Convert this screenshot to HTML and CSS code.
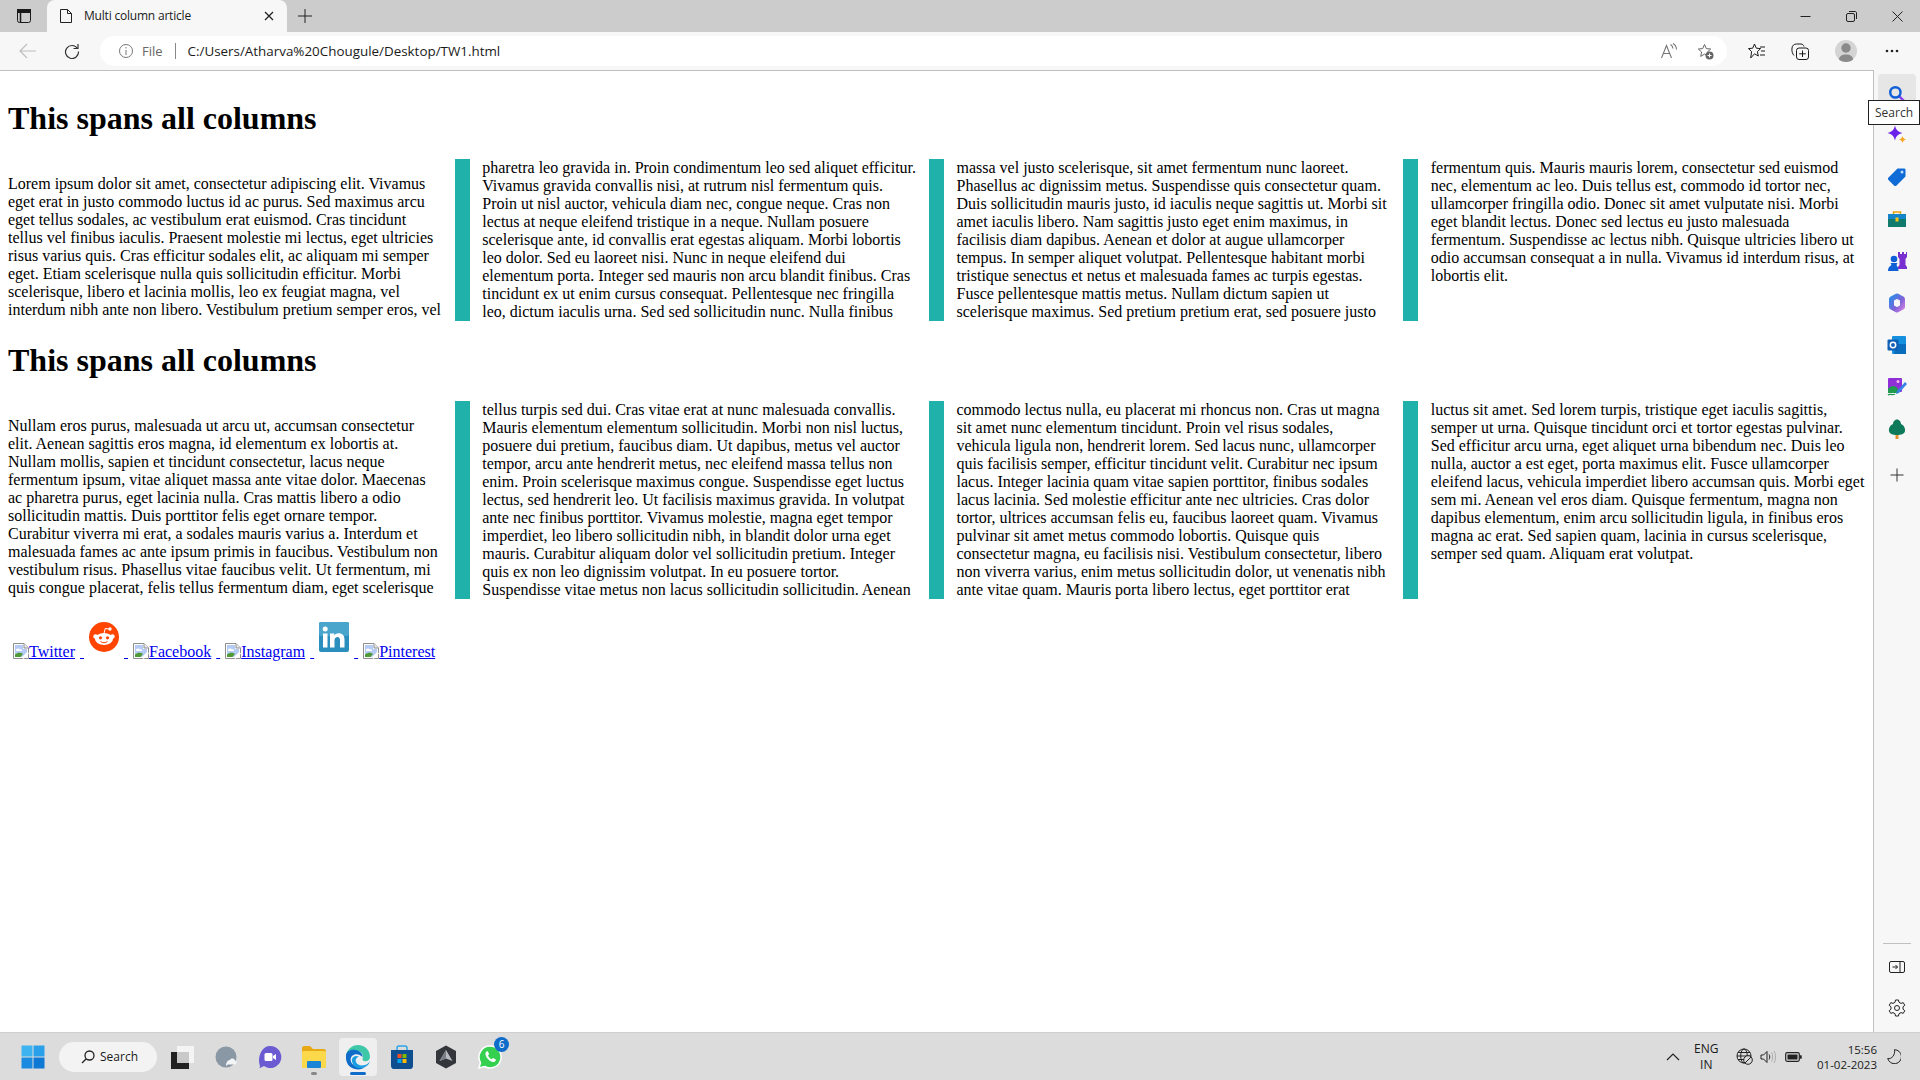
FILE: index.html
```html
<!DOCTYPE html>
<html lang="en">
<head>
  <meta charset="UTF-8" />
  <title>Multi column article</title>
  <link rel="stylesheet" href="styles.css">
</head>
<body>
  <svg class="defs" width="0" height="0">
    <symbol id="broken" viewBox="0 0 16 16">
      <path d="M0.5 0.5H11L15.5 5V15.5H0.5Z" fill="#fff" stroke="#8f8f8f"/>
      <path d="M11 0.5V5H15.5" fill="#e8e8e8" stroke="#8f8f8f"/>
      <path d="M2 2H10V6H14V9L9 14H2Z" fill="#b4cbf5"/>
      <path d="M3 6.5C4 5 6 5 7 6.5C8.500 6 9.500 7 9 8H3Z" fill="#fff"/>
      <path d="M2 14V11.500C5 9 8 9.500 10 11L7.500 14Z" fill="#4f9a35"/>
      <path d="M10 15.500L15.500 10" stroke="#fff" stroke-width="1.500"/>
    </symbol>
    <linearGradient id="m365" x1="0" y1="0" x2="1" y2="1">
      <stop offset="0" stop-color="#2f8be8"/>
      <stop offset="0.6" stop-color="#7d63d8"/>
      <stop offset="1" stop-color="#c67be0"/>
    </linearGradient>
  </svg>

  <!-- Title bar -->
  <div class="titlebar">
    <div class="tab-actions">
      <svg width="16" height="16" viewBox="0 0 16 16" fill="none" stroke="#1a1a1a"><rect x="1.500" y="1.500" width="13" height="13" rx="2"/><rect x="1.500" y="1.500" width="13" height="3" fill="#1a1a1a"/><path d="M4.500 4.500V14.500" stroke-width="1.500"/></svg>
    </div>
    <div class="tab">
      <svg width="14" height="16" viewBox="0 0 14 16" fill="none" stroke="#222"><path d="M1.500 1.500H8.500L12.500 5.500V14.500H1.500Z"/><path d="M8.500 1.500V5.500H12.500"/></svg>
      <span class="tab-title">Multi column article</span>
      <svg class="tab-close" width="10" height="10" viewBox="0 0 10 10" stroke="#222" stroke-width="1.300"><path d="M1 1L9 9M9 1L1 9"/></svg>
    </div>
    <div class="new-tab">
      <svg width="16" height="16" viewBox="0 0 16 16" stroke="#222"><path d="M8 1V15M1 8H15"/></svg>
    </div>
    <div class="window-controls">
      <div class="win-btn"><svg width="11" height="11" viewBox="0 0 11 11" stroke="#222"><path d="M0.500 5.500H10.500"/></svg></div>
      <div class="win-btn"><svg width="11" height="11" viewBox="0 0 11 11" fill="none" stroke="#222"><rect x="0.500" y="2.500" width="8" height="8" rx="1.500"/><path d="M3 0.500H9C10 0.500 10.500 1 10.500 2V8"/></svg></div>
      <div class="win-btn"><svg width="11" height="11" viewBox="0 0 11 11" stroke="#222"><path d="M0.500 0.500L10.500 10.500M10.500 0.500L0.500 10.500"/></svg></div>
    </div>
  </div>

  <!-- Toolbar -->
  <div class="toolbar">
    <div class="nav-btn"><svg width="18" height="16" viewBox="0 0 18 16" fill="none" stroke="#bdbdbd" stroke-width="1.200"><path d="M17 8H1M8 1L1 8L8 15"/></svg></div>
    <div class="nav-btn"><svg width="16" height="16" viewBox="0 0 16 16" fill="none" stroke="#333" stroke-width="1.200"><path d="M13.500 5.500A6.500 6.500 0 1 0 14.500 8.500"/><path d="M9.500 5.500H14V1"/></svg></div>
    <div class="address">
      <svg width="16" height="16" viewBox="0 0 16 16" fill="none" stroke="#777"><circle cx="8" cy="8" r="6.500"/><path d="M8 7V12M8 4V5.500"/></svg>
      <span class="scheme">File</span>
      <span class="sep"></span>
      <span class="url">C:/Users/Atharva%20Chougule/Desktop/TW1.html</span>
      <div class="address-icons">
        <svg width="16" height="16" viewBox="0 0 16 16" fill="none" stroke="#777" stroke-width="1.100"><path d="M0.500 15L5.500 2.500L10.500 15M2.300 10.500H8.700"/><path d="M9.500 1.500C11 2.500 11.700 3.500 12 5.500M12 0.500C14 1.500 15.300 3.500 15.500 6.500"/></svg>
        <svg width="17" height="17" viewBox="0 0 17 17"><path d="M7.500 1.500L9.300 5.600L13.700 6L10.400 9L11.300 13.400L7.500 11.100L3.700 13.400L4.600 9L1.300 6L5.700 5.600Z" fill="none" stroke="#666"/><circle cx="12.500" cy="12.500" r="4" fill="#666"/><path d="M10.500 12.500H14.500M12.500 10.500V14.500" stroke="#fff"/></svg>
      </div>
    </div>
    <div class="tool-btn"><svg width="18" height="16" viewBox="0 0 18 16" fill="none" stroke="#1a1a1a"><path d="M6.500 1L8.300 5.200L12.600 5.600L9.400 8.600L10.300 13L6.500 10.800L2.700 15L3.600 8.600L0.500 5.600L4.700 5.200Z"/><path d="M12 4H17M13 8H17M12 12H17"/></svg></div>
    <div class="tool-btn"><svg width="18" height="17" viewBox="0 0 18 17" fill="none" stroke="#1a1a1a"><path d="M3 12.500C1.500 11 0.500 8 1 5C1.300 2.500 3 1 5.500 1H10C11.500 1 12.500 2 13 3.500"/><rect x="5.500" y="5" width="12" height="11.500" rx="2.500"/><path d="M11.500 7.500V14M8.200 10.800H14.800"/></svg></div>
    <div class="avatar-btn">
      <div class="avatar"><svg width="22" height="22" viewBox="0 0 22 22" fill="#8a8a8a"><circle cx="11" cy="8" r="4.700"/><path d="M3.500 22C3.500 16 7 14.500 11 14.500C15 14.500 18.500 16 18.500 22Z"/></svg></div>
    </div>
    <div class="tool-btn"><svg width="14" height="4" viewBox="0 0 14 4" fill="#222"><circle cx="2" cy="2" r="1.300"/><circle cx="7" cy="2" r="1.300"/><circle cx="12" cy="2" r="1.300"/></svg></div>
  </div>

  <div class="main">
    <!-- Page content -->
    <div class="page">
      <div class="article">
        <h1>This spans all columns</h1>
        <p>Lorem ipsum dolor sit amet, consectetur adipiscing elit. Vivamus eget erat in justo commodo luctus id ac purus. Sed maximus arcu eget tellus sodales, ac vestibulum erat euismod. Cras tincidunt tellus vel finibus iaculis. Praesent molestie mi lectus, eget ultricies risus varius quis. Cras efficitur sodales elit, ac aliquam mi semper eget. Etiam scelerisque nulla quis sollicitudin efficitur. Morbi scelerisque, libero et lacinia mollis, leo ex feugiat magna, vel interdum nibh ante non libero. Vestibulum pretium semper eros, vel pharetra leo gravida in. Proin condimentum leo sed aliquet efficitur. Vivamus gravida convallis nisi, at rutrum nisl fermentum quis. Proin ut nisl auctor, vehicula diam nec, congue neque. Cras non lectus at neque eleifend tristique in a neque. Nullam posuere scelerisque ante, id convallis erat egestas aliquam. Morbi lobortis leo dolor. Sed eu laoreet nisi. Nunc in neque eleifend dui elementum porta. Integer sed mauris non arcu blandit finibus. Cras tincidunt ex ut enim cursus consequat. Pellentesque nec fringilla leo, dictum iaculis urna. Sed sed sollicitudin nunc. Nulla finibus massa vel justo scelerisque, sit amet fermentum nunc laoreet. Phasellus ac dignissim metus. Suspendisse quis consectetur quam. Duis sollicitudin mauris justo, id iaculis neque sagittis ut. Morbi sit amet iaculis libero. Nam sagittis justo eget enim maximus, in facilisis diam dapibus. Aenean et dolor at augue ullamcorper tempus. In semper aliquet volutpat. Pellentesque habitant morbi tristique senectus et netus et malesuada fames ac turpis egestas. Fusce pellentesque mattis metus. Nullam dictum sapien ut scelerisque maximus. Sed pretium pretium erat, sed posuere justo fermentum quis. Mauris mauris lorem, consectetur sed euismod nec, elementum ac leo. Duis tellus est, commodo id tortor nec, ullamcorper fringilla odio. Donec sit amet vulputate nisi. Morbi eget blandit lectus. Donec sed lectus eu justo malesuada fermentum. Suspendisse ac lectus nibh. Quisque ultricies libero ut odio accumsan consequat a in nulla. Vivamus id interdum risus, at lobortis elit.</p>
        <h1>This spans all columns</h1>
        <p>Nullam eros purus, malesuada ut arcu ut, accumsan consectetur elit. Aenean sagittis eros magna, id elementum ex lobortis at. Nullam mollis, sapien et tincidunt consectetur, lacus neque fermentum ipsum, vitae aliquet massa ante vitae dolor. Maecenas ac pharetra purus, eget lacinia nulla. Cras mattis libero a odio sollicitudin mattis. Duis porttitor felis eget ornare tempor. Curabitur viverra mi erat, a sodales mauris varius a. Interdum et malesuada fames ac ante ipsum primis in faucibus. Vestibulum non vestibulum risus. Phasellus vitae faucibus velit. Ut fermentum, mi quis congue placerat, felis tellus fermentum diam, eget scelerisque tellus turpis sed dui. Cras vitae erat at nunc malesuada convallis. Mauris elementum elementum sollicitudin. Morbi non nisl luctus, posuere dui pretium, faucibus diam. Ut dapibus, metus vel auctor tempor, arcu ante hendrerit metus, nec eleifend massa tellus non enim. Proin scelerisque maximus congue. Suspendisse eget luctus lectus, sed hendrerit leo. Ut facilisis maximus gravida. In volutpat ante nec finibus porttitor. Vivamus molestie, magna eget tempor imperdiet, leo libero sollicitudin nibh, in blandit dolor urna eget mauris. Curabitur aliquam dolor vel sollicitudin pretium. Integer quis ex non leo dignissim volutpat. In eu posuere tortor. Suspendisse vitae metus non lacus sollicitudin sollicitudin. Aenean commodo lectus nulla, eu placerat mi rhoncus non. Cras ut magna sit amet nunc elementum tincidunt. Proin vel risus sodales, vehicula ligula non, hendrerit lorem. Sed lacus nunc, ullamcorper quis facilisis semper, efficitur tincidunt velit. Curabitur nec ipsum lacus. Integer lacinia quam vitae sapien porttitor, finibus sodales lacus lacinia. Sed molestie efficitur ante nec ultricies. Cras dolor tortor, ultrices accumsan felis eu, faucibus laoreet quam. Vivamus pulvinar sit amet metus commodo lobortis. Quisque quis consectetur magna, eu facilisis nisi. Vestibulum consectetur, libero non viverra varius, enim metus sollicitudin dolor, ut venenatis nibh ante vitae quam. Mauris porta libero lectus, eget porttitor erat luctus sit amet. Sed lorem turpis, tristique eget iaculis sagittis, semper ut urna. Quisque tincidunt orci et tortor egestas pulvinar. Sed efficitur arcu urna, eget aliquet urna bibendum nec. Duis leo nulla, auctor a est eget, porta maximus elit. Fusce ullamcorper eleifend lacus, vehicula imperdiet libero accumsan quis. Morbi eget sem mi. Aenean vel eros diam. Quisque fermentum, magna non dapibus elementum, enim arcu sollicitudin ligula, in finibus eros magna ac erat. Sed sapien quam, lacinia in cursus scelerisque, semper sed quam. Aliquam erat volutpat.</p>
      </div>

      <!-- Social links -->
      <div class="social"><a href="#"><span class="broken"><svg width="16" height="16"><use href="#broken"/></svg>Twitter</span> </a><a href="#"><svg class="social-img" width="30" height="30" viewBox="0 0 30 30"><circle cx="15" cy="15" r="15" fill="#ff4500"/><ellipse cx="15" cy="17" rx="9" ry="6" fill="#fff"/><circle cx="6.500" cy="14.500" r="2.200" fill="#fff"/><circle cx="23.500" cy="14.500" r="2.200" fill="#fff"/><circle cx="21" cy="7" r="1.700" fill="#fff"/><path d="M15 11.500L16.200 6.500L21 7.200" fill="none" stroke="#fff"/><circle cx="11.500" cy="15.800" r="1.600" fill="#ff4500"/><circle cx="18.500" cy="15.800" r="1.600" fill="#ff4500"/><path d="M11.500 19.500C13.500 21 16.500 21 18.500 19.500" fill="none" stroke="#ff4500"/></svg> </a><a href="#"><span class="broken"><svg width="16" height="16"><use href="#broken"/></svg>Facebook</span> </a><a href="#"><span class="broken"><svg width="16" height="16"><use href="#broken"/></svg>Instagram</span> </a><a href="#"><svg class="social-img" width="30" height="30" viewBox="0 0 30 30"><rect width="30" height="30" rx="2" fill="#2b8fbd"/><rect width="30" height="14" rx="2" fill="#4aa5cd"/><rect x="4" y="11.500" width="4.500" height="14" fill="#fff"/><circle cx="6.200" cy="7" r="2.500" fill="#fff"/><path d="M11 11.500H15.300V13.500C16.200 12 17.800 11.200 19.700 11.200C23.500 11.200 25.500 13.500 25.500 17.500V25.500H21V18.300C21 16.300 20.300 15 18.500 15C16.600 15 15.500 16.300 15.500 18.300V25.500H11Z" fill="#fff"/></svg> </a><a href="#"><span class="broken"><svg width="16" height="16"><use href="#broken"/></svg>Pinterest</span></a></div>
    </div>

    <!-- Edge sidebar -->
    <div class="sidebar">
      <div class="side-btn active"><svg class="side-search" width="18" height="18" viewBox="0 0 22 22" fill="none"><path d="M13.500 13.500L20 20" stroke="#8a3ff0" stroke-width="3" stroke-linecap="round"/><circle cx="9" cy="9" r="6.300" stroke="#0f5fd7" stroke-width="3"/></svg></div>
      <div class="side-btn"><svg width="20" height="20" viewBox="0 0 20 20"><path d="M8 0.500C9 5 11 7 15.500 8C11 9 9 11 8 15.500C7 11 5 9 0.500 8C5 7 7 5 8 0.500Z" fill="#6a22e8"/><path d="M15.500 11C16 13 17 14 19 14.500C17 15 16 16 15.500 18C15 16 14 15 12 14.500C14 14 15 13 15.500 11Z" fill="#f5a623"/></svg></div>
      <div class="side-btn"><svg width="20" height="20" viewBox="0 0 20 20"><path d="M10.500 1.500H17C18 1.500 18.500 2 18.500 3V9.500L9.500 18.500C8.800 19.200 7.700 19.200 7 18.500L1.500 13C0.800 12.300 0.800 11.200 1.500 10.500Z" fill="#0f6cd6"/><circle cx="15" cy="5" r="1.500" fill="#bcdcff"/></svg></div>
      <div class="side-btn"><svg width="20" height="18" viewBox="0 0 20 18"><path d="M6.500 5V2H13.500V5" fill="none" stroke="#e5a50a" stroke-width="1.500"/><rect x="1" y="4" width="18" height="5" fill="#1585c9"/><rect x="1" y="9" width="18" height="8" fill="#107a6c"/><rect x="8.500" y="7.500" width="3" height="4" fill="#f5c518"/></svg></div>
      <div class="side-btn"><svg width="20" height="21" viewBox="0 0 20 21"><path d="M11 1H13V3H15V1H17V3H19V1H20V6L18.500 8V14L20 16V18H11V16L12.500 14V8L11 6Z" fill="#7a2fd0"/><circle cx="7" cy="8" r="3.300" fill="#0f5fd7"/><path d="M3.500 12H10.500L9.500 14C10.500 15.500 11.500 17 11.500 20H1C1 17 2 15.500 4.500 14Z" fill="#0f5fd7"/></svg></div>
      <div class="side-btn"><svg width="20" height="20" viewBox="0 0 20 20"><path d="M10 3L15.500 6V14L10 17L4.500 14V6Z" fill="none" stroke="url(#m365)" stroke-width="5" stroke-linejoin="round"/></svg></div>
      <div class="side-btn"><svg width="20" height="20" viewBox="0 0 20 20"><rect x="5" y="1" width="14" height="18" rx="1" fill="#1490df"/><path d="M9 9H19V19H7Z" fill="#0a6cbd"/><rect x="0.500" y="4.500" width="11" height="11" rx="1" fill="#0f5fb5"/><circle cx="6" cy="10" r="2.700" fill="none" stroke="#fff" stroke-width="1.500"/></svg></div>
      <div class="side-btn"><svg width="20" height="20" viewBox="0 0 20 20"><rect x="1" y="1" width="14" height="14" rx="1" fill="#8f2fd8"/><circle cx="11" cy="4.500" r="1.500" fill="#f7b5e8"/><path d="M1 12C4 8 8 8 11 12L10 16H1Z" fill="#1f9a4e"/><path d="M10 14L18 5L20 7L12 16L9 17Z" fill="#3b82e8"/><path d="M1 18C3 16 5 19 8 17" fill="none" stroke="#1f9a4e" stroke-width="1.300"/></svg></div>
      <div class="side-btn"><svg width="18" height="20" viewBox="0 0 18 20"><rect x="7.500" y="14" width="3" height="6" fill="#e8912a"/><path d="M9 0.500C11.500 0.500 13 3 13 5C15.500 6 17.500 9 17 12C16.500 15 13 16 9 16C5 16 1.500 15 1 12C0.500 9 2.500 6 5 5C5 3 6.500 0.500 9 0.500Z" fill="#0f7a5a"/></svg></div>
      <div class="side-btn side-add"><svg width="14" height="14" viewBox="0 0 14 14" stroke="#333"><path d="M7 0.500V13.500M0.500 7H13.500"/></svg></div>
      <div class="side-spacer"></div>
      <div class="side-divider"></div>
      <div class="side-btn side-foot"><svg width="16" height="14" viewBox="0 0 16 14" fill="none" stroke="#222"><rect x="0.500" y="1.500" width="15" height="11" rx="1.500"/><path d="M11 1.500V12.500"/><path d="M3.500 7H8.500M6.500 5L8.500 7L6.500 9"/></svg></div>
      <div class="side-btn side-foot"><svg width="18" height="18" viewBox="0 0 18 18" fill="none" stroke="#222"><circle cx="9" cy="9" r="2.500"/><path d="M7.500 1H10.500L11 3.300L13 4.400L15.200 3.600L16.800 6.300L15 7.800V10.200L16.800 11.700L15.200 14.400L13 13.600L11 14.700L10.500 17H7.500L7 14.700L5 13.600L2.800 14.400L1.200 11.700L3 10.200V7.800L1.200 6.300L2.800 3.600L5 4.400L7 3.300Z"/></svg></div>
      <div class="tooltip">Search</div>
    </div>
  </div>

  <!-- Taskbar -->
  <div class="taskbar">
    <div class="task-item"><svg width="24" height="24" viewBox="0 0 24 24"><rect x="0.500" y="0.500" width="11" height="11" fill="#3db4f0"/><rect x="12.500" y="0.500" width="11" height="11" fill="#2ba0ea"/><rect x="0.500" y="12.500" width="11" height="11" fill="#1a8be0"/><rect x="12.500" y="12.500" width="11" height="11" fill="#0f78d4"/></svg></div>
    <div class="task-search">
      <svg width="14" height="14" viewBox="0 0 14 14" fill="none" stroke="#222" stroke-width="1.300"><circle cx="8.500" cy="5.500" r="4.500"/><path d="M5.300 8.700L1 13"/></svg>
      <span>Search</span>
    </div>
    <div class="task-item"><svg width="24" height="24" viewBox="0 0 24 24"><rect x="7" y="1" width="17" height="17" fill="#f4f4f4"/><rect x="1" y="7" width="18" height="17" fill="#222"/><rect x="7" y="7" width="12" height="11" fill="#c9c9c9"/></svg></div>
    <div class="task-item"><svg width="22" height="22" viewBox="0 0 22 22"><circle cx="11" cy="11" r="10.500" fill="#8a97a5"/><path d="M11 20C11 16 13 14 15 14C16 12 19 12 20 14.500C22 15 22 18 20 18.500H13Z" fill="#f2f4f6"/></svg></div>
    <div class="task-item"><svg width="24" height="24" viewBox="0 0 24 24"><path d="M12 1A11 11 0 1 1 6 21L2 23C1.500 23 1.500 23 2 21C-1 14 3 1 12 1Z" fill="#6a5bd2"/><rect x="6.500" y="8" width="8" height="8" rx="1.500" fill="#fff"/><path d="M15 11L18 9V15L15 13Z" fill="#fff"/></svg></div>
    <div class="task-item open"><svg width="24" height="22" viewBox="0 0 24 22"><path d="M0 2C0 1 1 0 2 0H8L11 3H22C23 3 24 4 24 5V20C24 21 23 22 22 22H2C1 22 0 21 0 20Z" fill="#e8a917"/><rect x="0" y="5" width="24" height="17" rx="1.500" fill="#fbd94b"/><rect x="5" y="15" width="14" height="7" rx="1" fill="#1a84d6"/></svg></div>
    <div class="task-item active"><svg width="26" height="26" viewBox="0 0 26 26"><path d="M1 12C2 5 7 1 13 1C20 1 25 6 25 13C25 16 22 18 19 17C17 16.500 17.500 14 18 13C18 9 15 6.500 11.500 7C6 8 1 10 1 12Z" fill="#3fc8a8"/><path d="M1 12C1 7 6 5 11 6C15 7 18 10 17.500 13C15 10 10 9 7 12C4 15 6 21 12 23C14 24 18 24 20 23C17 26 11 26 7 24C3 22 0.500 17 1 12Z" fill="#0f6cc9"/><path d="M7 15C8 12 12 11 14 13C12 13 10 15 11 18C12 21 16 22 20 21C22 20.500 24 19 25 17C24 22 18 25 13 24C9 23 6.500 19 7 15Z" fill="#1b9de2"/></svg></div>
    <div class="task-item"><svg width="24" height="24" viewBox="0 0 24 24"><path d="M7 5V3C7 1.500 8 1 9 1H15C16 1 17 1.500 17 3V5" fill="none" stroke="#2ea4e6" stroke-width="1.500"/><path d="M1 5H23V21C23 22.500 22 24 20.500 24H3.500C2 24 1 22.500 1 21Z" fill="#0f4f8f"/><rect x="7.500" y="9" width="4" height="4" fill="#f25022"/><rect x="12.500" y="9" width="4" height="4" fill="#7fba00"/><rect x="7.500" y="14" width="4" height="4" fill="#00a4ef"/><rect x="12.500" y="14" width="4" height="4" fill="#ffb900"/></svg></div>
    <div class="task-item"><svg width="22" height="24" viewBox="0 0 22 24"><path d="M11 0.500L21 6V18L11 23.500L1 18V6Z" fill="#33363b"/><path d="M11 5L17.500 16L11 13.500L4.500 16Z" fill="#b8bcc2"/><path d="M11 5V13.500L4.500 16Z" fill="#7a7f86"/></svg></div>
    <div class="task-item task-badge">
      <svg width="24" height="24" viewBox="0 0 24 24"><path d="M12 1A11 11 0 1 1 6.500 21.500L1 23L2.500 17.500A11 11 0 0 1 12 1Z" fill="#35d04f" stroke="#fff" stroke-width="1.500"/><path d="M8.500 6.500C7 8 7 10.500 9.500 13.500C12 16.500 15 18 17 16.500C18 15.500 18 14.500 17.500 14.200L15 13C14.500 12.800 14 14.500 13.500 14.300C12 13.500 10.500 12 10 10.500C10 10 11.500 9.500 11 9L10 6.500C9.800 6 9 6 8.500 6.500Z" fill="#fff"/></svg>
      <span class="badge">6</span>
    </div>
    <div class="tray">
      <svg class="tray-chevron" width="14" height="8" viewBox="0 0 14 8" fill="none" stroke="#222" stroke-width="1.200"><path d="M1 7L7 1L13 7"/></svg>
      <div class="lang"><span>ENG</span><span>IN</span></div>
      <svg class="tray-globe" width="17" height="17" viewBox="0 0 17 17" fill="none" stroke="#222"><circle cx="8" cy="8" r="7"/><ellipse cx="8" cy="8" rx="3.300" ry="7"/><path d="M1 8H15M2 4.500H14M2 11.500H14"/><circle cx="12" cy="12" r="4.300" fill="#dcdcdc"/><path d="M9 15L15 9"/></svg>
      <svg class="tray-sound" width="17" height="14" viewBox="0 0 17 14" fill="none" stroke="#222"><path d="M1 5H3.500L7 1.500V12.500L3.500 9H1Z"/><path d="M9 4.500C10 6 10 8 9 9.500"/><path d="M11.500 2.500C13 5 13 9 11.500 11.500M14 1C16 4.500 16 9.500 14 13" stroke="#aaa"/></svg>
      <svg class="tray-battery" width="17" height="10" viewBox="0 0 17 10"><rect x="0.700" y="0.700" width="13.600" height="8.600" rx="1.500" fill="none" stroke="#222" stroke-width="1.200"/><rect x="2.500" y="2.500" width="10" height="5" fill="#222"/><rect x="15" y="3.300" width="1.700" height="3.400" fill="#222"/></svg>
      <div class="clock"><span>15:56</span><span>01-02-2023</span></div>
      <svg class="tray-moon" width="14" height="15" viewBox="0 0 14 15" fill="none" stroke="#222"><path d="M7.500 0.700A7 7 0 1 1 0.700 9.500C4.500 10.500 8.500 6 7.500 0.700Z"/></svg>
    </div>
  </div>
</body>
</html>
```

FILE: styles.css
```css
html, body {
  margin: 0;
  padding: 0;
  height: 100%;
  overflow: hidden;
}

body {
  display: flex;
  flex-direction: column;
  height: 1080px;
  background-color: #fff;
  color: #1a1a1a;
  font-family: "Open Sans", "Liberation Sans", sans-serif;
  font-size: 12px;
}

svg {
  display: block;
  flex-shrink: 0;
}

.defs {
  position: absolute;
}

/* Title bar */
.titlebar {
  display: flex;
  align-items: flex-end;
  height: 32px;
  background-color: #ccc;
  flex-shrink: 0;
}

.tab-actions {
  display: flex;
  align-items: center;
  justify-content: center;
  width: 47px;
  height: 32px;
}

.tab {
  display: flex;
  align-items: center;
  width: 240px;
  height: 32px;
  box-sizing: border-box;
  padding: 0 13px 0 12px;
  background-color: #f7f7f7;
  border-radius: 8px 8px 0 0;
}

.tab-title {
  margin: 0 0 1px 11px;
  flex-grow: 1;
  letter-spacing: -0.2px;
}

.new-tab {
  display: flex;
  align-items: center;
  justify-content: center;
  width: 36px;
  height: 32px;
}

.window-controls {
  display: flex;
  margin-left: auto;
  height: 32px;
}

.win-btn {
  display: flex;
  align-items: center;
  justify-content: center;
  width: 46px;
}

/* Toolbar */
.toolbar {
  display: flex;
  align-items: center;
  height: 38px;
  padding: 0 6.5px 0 6px;
  background-color: #f7f7f7;
  flex-shrink: 0;
}

.nav-btn {
  display: flex;
  align-items: center;
  justify-content: center;
  width: 44px;
  height: 30px;
}

.address {
  display: flex;
  align-items: center;
  flex-grow: 1;
  height: 30px;
  margin: 0 8.5px 0 6px;
  padding: 0 10px 0 18px;
  background-color: #fff;
  border-radius: 15px;
  font-size: 13px;
}

.scheme {
  margin-left: 8px;
  color: #666;
}

.sep {
  width: 1px;
  height: 16px;
  margin: 0 12px;
  background-color: #888;
}

.url {
  flex-grow: 1;
  font-size: 13.4px;
}

.address-icons {
  display: flex;
  align-items: center;
  gap: 20px;
  margin-right: 3px;
}

.tool-btn {
  display: flex;
  align-items: center;
  justify-content: center;
  width: 43px;
  height: 30px;
}

.avatar-btn {
  display: flex;
  align-items: center;
  justify-content: center;
  width: 49px;
}

.avatar {
  width: 22px;
  height: 22px;
  background-color: #d4d4d4;
  border-radius: 50%;
  overflow: hidden;
}

/* Main area */
.main {
  display: flex;
  flex-grow: 1;
  min-height: 0;
}

.page {
  flex-grow: 1;
  min-width: 0;
  padding: 8px;
  border-top: 1px solid #c0c0c0;
  border-right: 1px solid #c0c0c0;
  color: #000;
  font-family: "Liberation Serif", "Times New Roman", serif;
  font-size: 16px;
}

.article {
  column-count: 4;
  column-gap: 40px;
  column-rule: 15px solid lightseagreen;
}

.article h1 {
  column-span: all;
  font-size: 32px;
}

.social {
  padding-top: 18px;
}

.social a {
  color: #00e;
}

.broken {
  display: inline-block;
  margin: 5px;
  text-decoration: underline;
}

.broken svg {
  display: inline-block;
  vertical-align: -2px;
}

.social-img {
  display: inline-block;
  margin: 5px;
  vertical-align: baseline;
}

/* Edge sidebar */
.sidebar {
  position: relative;
  display: flex;
  flex-direction: column;
  align-items: center;
  width: 46px;
  padding: 4px 0 2px;
  box-sizing: border-box;
  background-color: #f7f7f7;
  flex-shrink: 0;
}

.side-btn {
  display: flex;
  align-items: center;
  justify-content: center;
  width: 38px;
  height: 38px;
  margin-bottom: 4px;
  border-radius: 4px;
}

.side-btn.active {
  background-color: #e6e6e6;
}

.side-search {
  margin-top: 2px;
}

.side-add {
  margin-top: 4px;
}

.side-spacer {
  flex-grow: 1;
}

.side-divider {
  width: 28px;
  height: 1px;
  margin-bottom: 4px;
  background-color: #c0c0c0;
}

.side-foot {
  height: 37px;
}

.tooltip {
  position: absolute;
  top: 30px;
  right: 0;
  width: 52px;
  height: 25px;
  box-sizing: border-box;
  border: 1px solid #222;
  background-color: #fff;
  font-size: 12px;
  line-height: 23px;
  text-align: center;
  color: #333;
}

/* Taskbar */
.taskbar {
  display: flex;
  align-items: center;
  height: 48px;
  padding-left: 14px;
  border-top: 1px solid #cfcfcf;
  box-sizing: border-box;
  background-color: #dcdcdc;
  flex-shrink: 0;
}

.task-item {
  position: relative;
  display: flex;
  align-items: center;
  justify-content: center;
  width: 38px;
  height: 38px;
  margin-right: 6px;
  border-radius: 4px;
}

.task-item.active {
  background-color: #efefef;
}

.task-item.active::after,
.task-item.open::after {
  content: "";
  position: absolute;
  bottom: 1px;
  left: 50%;
  width: 6px;
  height: 3px;
  margin-left: -3px;
  background-color: #888;
  border-radius: 2px;
}

.task-item.active::after {
  width: 16px;
  margin-left: -8px;
  background-color: #0f6cc9;
}

.task-search {
  display: flex;
  align-items: center;
  gap: 5px;
  width: 98px;
  height: 30px;
  box-sizing: border-box;
  margin: 0 6px 0 1px;
  padding-left: 22px;
  background-color: #f3f3f3;
  border-radius: 15px;
}

.badge {
  position: absolute;
  top: -1px;
  right: 0;
  width: 15px;
  height: 15px;
  background-color: #0f6cc9;
  border-radius: 50%;
  color: #fff;
  font-size: 10px;
  line-height: 15px;
  text-align: center;
}

.tray {
  display: flex;
  align-items: center;
  margin-left: auto;
  color: #1a1a1a;
}

.lang {
  display: flex;
  flex-direction: column;
  align-items: center;
  gap: 2px;
  margin-left: 14px;
  font-size: 12px;
  line-height: 14px;
}

.tray-globe {
  margin-left: 17.500px;
}

.tray-sound {
  margin-left: 7px;
}

.tray-battery {
  margin-left: 8px;
}

.clock {
  display: flex;
  flex-direction: column;
  align-items: flex-end;
  width: 75px;
  font-size: 11.5px;
  line-height: 15px;
}

.tray-moon {
  margin: 0 19px 0 10px;
}
```
